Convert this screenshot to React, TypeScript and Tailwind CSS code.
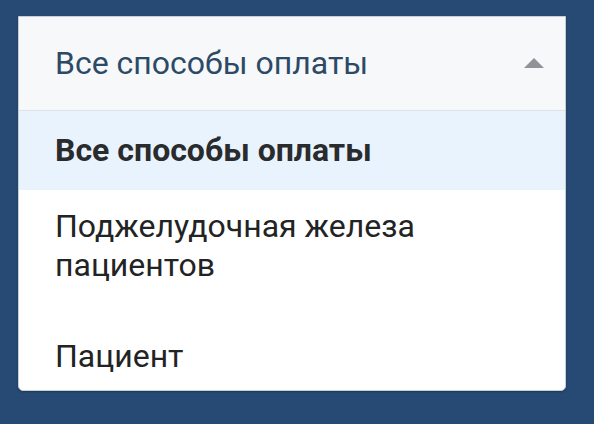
import React from "react";

const options = [
  { id: "all", label: "Все способы оплаты", selected: true, cls: "pt-[20px] pb-[20px]" },
  { id: "pancreas", label: "Поджелудочная железа пациентов", selected: false, cls: "pt-[17px] pb-[26px] pr-[120px]" },
  { id: "patient", label: "Пациент", selected: false, cls: "pt-[26px] pb-[14px]" },
];

export default function App() {
  return (
    <div
      className="h-[424px] w-full bg-[#264a73] pt-[16px] pl-[18px]"
      style={{ fontFamily: "Roboto, 'Noto Sans', sans-serif" }}
    >
      <div className="w-[548px] overflow-hidden rounded-b-[5px] border border-[#c6ced8] bg-white shadow-[0_1px_2px_rgba(0,0,0,0.25)]">
        {/* Select header */}
        <div className="flex items-center justify-between border-b border-[#dfe3e8] bg-[#f7f8fa] pl-[36px] pr-[21px] pt-[27px] pb-[27px]">
          <span className="text-[32px] leading-[39px] text-[#2c4a66]">
            Все способы оплаты
          </span>
          <svg width="20" height="10" viewBox="0 0 20 10" className="mb-[1px]">
            <polygon points="0,10 10,0 20,10" fill="#8f9297" />
          </svg>
        </div>

        {/* Options */}
        <ul>
          {options.map((opt) => (
            <li
              key={opt.id}
              className={`pl-[36px] text-[32px] leading-[39px] ${opt.cls} ${
                opt.selected
                  ? "bg-[#e9f3fd] font-bold text-[#2a2b2d]"
                  : "text-[#222324]"
              }`}
            >
              {opt.label}
            </li>
          ))}
        </ul>
      </div>
    </div>
  );
}
